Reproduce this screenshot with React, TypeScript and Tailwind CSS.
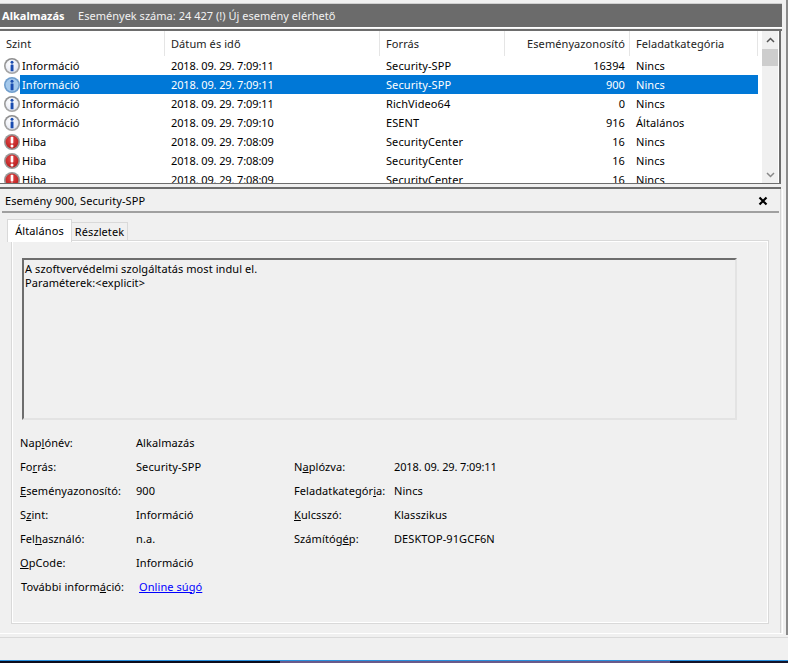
import React from "react";

const font = "[font-family:'Noto_Sans','Open_Sans',sans-serif]";

function InfoIcon({ selected }: { selected?: boolean }) {
  return (
    <svg width="16" height="16" viewBox="0 0 16 16" className="shrink-0">
      <defs>
        <linearGradient id="ringG" x1="0" y1="0" x2="0" y2="1">
          <stop offset="0" stopColor="#8c8c8c" />
          <stop offset="1" stopColor="#a8a8a8" />
        </linearGradient>
        <radialGradient id="infoFill" cx="0.4" cy="0.35" r="0.8">
          <stop offset="0" stopColor="#ffffff" />
          <stop offset="0.7" stopColor="#e8ebf4" />
          <stop offset="1" stopColor="#c4cbe0" />
        </radialGradient>
      </defs>
      <circle cx="8" cy="8" r="8" fill={selected ? "#6f9dcc" : "url(#ringG)"} />
      <circle cx="8" cy="8" r="6.4" fill={selected ? "#a5c9ec" : "url(#infoFill)"} />
      <circle cx="8" cy="4.2" r="1.5" fill="#1a4cb0" />
      <rect x="6.6" y="6.4" width="2.9" height="6.8" rx="0.5" fill="#1a4cb0" />
    </svg>
  );
}

function ErrorIcon() {
  return (
    <svg width="16" height="16" viewBox="0 0 16 16" className="shrink-0">
      <defs>
        <radialGradient id="errFill" cx="0.45" cy="0.35" r="0.8">
          <stop offset="0" stopColor="#e84a4a" />
          <stop offset="1" stopColor="#ac1414" />
        </radialGradient>
      </defs>
      <circle cx="8" cy="8" r="8" fill="#989898" />
      <circle cx="8" cy="8" r="6.4" fill="url(#errFill)" />
      <rect x="6.7" y="2.8" width="2.6" height="6.8" rx="0.8" fill="#ffffff" />
      <circle cx="8" cy="12" r="1.5" fill="#ffffff" />
    </svg>
  );
}

const rows = [
  ["i", "Információ", "2018. 09. 29. 7:09:11", "Security-SPP", "16394", "Nincs"],
  ["s", "Információ", "2018. 09. 29. 7:09:11", "Security-SPP", "900", "Nincs"],
  ["i", "Információ", "2018. 09. 29. 7:09:11", "RichVideo64", "0", "Nincs"],
  ["i", "Információ", "2018. 09. 29. 7:09:10", "ESENT", "916", "Általános"],
  ["e", "Hiba", "2018. 09. 29. 7:08:09", "SecurityCenter", "16", "Nincs"],
  ["e", "Hiba", "2018. 09. 29. 7:08:09", "SecurityCenter", "16", "Nincs"],
  ["e", "Hiba", "2018. 09. 29. 7:08:09", "SecurityCenter", "16", "Nincs"],
];

const cols = "grid grid-cols-[165px_215px_125px_125px_128px]";

function Row({ r }: { r: string[] }) {
  const sel = r[0] === "s";
  const bg = sel ? "bg-[#0078d7]" : "";
  return (
    <div className={`${cols} h-[19px] items-center shrink-0 ${sel ? "text-white" : "text-black"}`}>
      <div className="flex items-center pl-1 h-full">
        {r[0] === "e" ? <ErrorIcon /> : <InfoIcon selected={sel} />}
        <span className={`pl-[2px] pb-px h-full flex-1 flex items-center ${bg}`}>{r[1]}</span>
      </div>
      <div className={`pl-[6px] pb-px h-full flex items-center tracking-[-0.12px] ${bg}`}>{r[2]}</div>
      <div className={`pl-[6px] pb-px h-full flex items-center ${bg}`}>{r[3]}</div>
      <div className={`pr-[5px] pb-px h-full flex items-center justify-end ${bg}`}>{r[4]}</div>
      <div className={`pl-[6px] pb-px h-full flex items-center ${bg}`}>{r[5]}</div>
    </div>
  );
}

function Field({ label, value, width = "w-[116px]", valueClass = "" }: { label: React.ReactNode; value: string; width?: string; valueClass?: string }) {
  return (
    <div className="flex h-6 items-center text-black">
      <div className={`${width} shrink-0`}>{label}</div>
      <div className={valueClass}>{value}</div>
    </div>
  );
}

export default function App() {
  return (
    <div className={`${font} w-[788px] h-[663px] bg-[#f0f0f0] overflow-hidden flex flex-col text-[11px] leading-none tracking-[0.08px] text-black`}>
      <div className="h-[635px] shrink-0 border-r-2 border-[#8a8a8a] flex flex-col">
        <div className="h-[3px] shrink-0" />
        <div className="flex shrink-0 w-[782px] h-[24px] bg-[#6b6b6b] border-t border-[#d0d0d0] items-center pl-[2px] pb-[1px] text-white tracking-[0.02px]">
          <span className="font-bold w-[76px]">Alkalmazás</span>
          <span className="text-[#f2f2f2]">Események száma: 24 427 (!) Új esemény elérhető</span>
        </div>
        <div className="h-[4px] w-[782px] shrink-0 border-t border-white bg-[#f0f0f0] border-b-2 border-b-[#6d6d6d]" />

        <div className="flex shrink-0 w-[781px] h-[152px] bg-white border-r-2 border-[#6d6d6d] overflow-hidden">
          <div className="w-[758px] shrink-0 flex flex-col">
            <div className={`${cols} h-[25px] shrink-0 items-center text-[#222]`}>
              <div className="pl-[6px] h-full flex items-center border-r border-[#e5e5e5]">Szint</div>
              <div className="pl-[6px] h-full flex items-center border-r border-[#e5e5e5]">Dátum és idő</div>
              <div className="pl-[6px] h-full flex items-center border-r border-[#e5e5e5]">Forrás</div>
              <div className="pr-[4px] h-full flex items-center justify-end border-r border-[#e5e5e5]">Eseményazonosító</div>
              <div className="pl-[6px] h-full flex items-center border-r border-[#e5e5e5]">Feladatkategória</div>
            </div>
            {rows.map((r, i) => (
              <Row key={i} r={r} />
            ))}
          </div>
          <div className="ml-[4px] w-[16px] bg-[#f0f0f0] flex flex-col items-center">
            <div className="h-[18px] w-full flex items-center justify-center">
              <svg width="9" height="6" viewBox="0 0 9 6"><path d="M1 5 L4.5 1.5 L8 5" fill="none" stroke="#555" strokeWidth="1.5" /></svg>
            </div>
            <div className="h-[17px] w-full bg-[#cdcdcd]" />
            <div className="flex-1" />
            <div className="h-[17px] w-full flex items-center justify-center">
              <svg width="9" height="6" viewBox="0 0 9 6"><path d="M1 1 L4.5 4.5 L8 1" fill="none" stroke="#888" strokeWidth="1.5" /></svg>
            </div>
          </div>
        </div>

        <div className="shrink-0 w-[781px] h-[1px] bg-[#6d6d6d]" />
        <div className="shrink-0 w-[781px] h-[5px] border-b-2 border-[#6d6d6d]" />

        <div className="w-[783px] h-[445px] shrink-0 border-r border-b border-white">
          <div className="w-[781px] h-[444px] border-r border-[#d4d4d4] flex flex-col">
            <div className="shrink-0 w-[777px] h-[24px] ml-[2px] pt-px border-b-2 border-[#a0a0a0] flex items-center justify-between pl-[3px] pr-[11px]">
              <span>Esemény 900, Security-SPP</span>
              <svg width="10" height="10" viewBox="0 0 10 10"><path d="M1.5 1.5 L8.5 8.5 M8.5 1.5 L1.5 8.5" stroke="#000" strokeWidth="2.2" /></svg>
            </div>

            <div className="shrink-0 flex items-end h-[27px] pl-[7px]">
              <div className="relative z-10 h-[23px] -mb-[2px] w-[65px] bg-white border border-b-0 border-[#d9d9d9] flex items-center justify-center pb-[2px]">Általános</div>
              <div className="h-[18px] w-[56px] border border-b-0 border-l-0 border-[#d9d9d9] flex items-center justify-center pb-px">Részletek</div>
            </div>

            <div className="shrink-0 ml-[11px] w-[758px] h-[384px] border-2 border-white outline outline-1 outline-[#d9d9d9] -outline-offset-1 pl-[9px] pt-[16px] flex flex-col">
              <div className="w-[715px] h-[162px] border-2 border-t-[#6d6d6d] border-l-[#6d6d6d] border-r-[#e3e3e3] border-b-[#e3e3e3] pl-[1px] pt-[2px] leading-[14px]">
                <div>A szoftvervédelmi szolgáltatás most indul el.</div>
                <div>Paraméterek:&lt;explicit&gt;</div>
              </div>

              <div className="mt-[10px] ml-[-2px] flex">
                <div className="w-[274px] shrink-0">
                  <Field label={<>Nap<u>l</u>ónév:</>} value="Alkalmazás" />
                  <Field label={<>Fo<u>r</u>rás:</>} value="Security-SPP" />
                  <Field label={<><u>E</u>seményazonosító:</>} value="900" />
                  <Field label={<>S<u>z</u>int:</>} value="Információ" />
                  <Field label={<>Fel<u>h</u>asználó:</>} value="n.a." />
                  <Field label={<><u>O</u>pCode:</>} value="Információ" />
                </div>
                <div className="pt-[24px]">
                  <Field width="w-[100px]" label={<>N<u>a</u>plózva:</>} value="2018. 09. 29. 7:09:11" valueClass="tracking-[-0.12px]" />
                  <Field width="w-[100px]" label={<>Feladatkategór<u>i</u>a:</>} value="Nincs" />
                  <Field width="w-[100px]" label={<><u>K</u>ulcsszó:</>} value="Klasszikus" />
                  <Field width="w-[100px]" label={<>Számítóg<u>é</u>p:</>} value="DESKTOP-91GCF6N" />
                </div>
              </div>
              <div className="ml-[-1px] flex h-6 items-center">
                <span className="w-[118px] shrink-0">További inform<u>á</u>ció:</span>
                <a className="text-[#0000ff] underline" href="#">Online súgó</a>
              </div>
            </div>
          </div>
        </div>
      </div>

      <div className="flex-1 flex flex-col">
        <div className="h-[2px] shrink-0" />
        <div className="h-[1px] shrink-0 bg-[#d9d9d9]" />
        <div className="flex-1" />
        <div className="h-[1px] shrink-0 bg-[#2a8fdc]" />
        <div className="h-[2px] shrink-0 flex">
          <div className="w-[280px] bg-[#0c0c1c]" />
          <div className="w-[390px] bg-[#6a5a8a]" />
          <div className="flex-1 bg-[#14142a]" />
        </div>
      </div>
    </div>
  );
}
